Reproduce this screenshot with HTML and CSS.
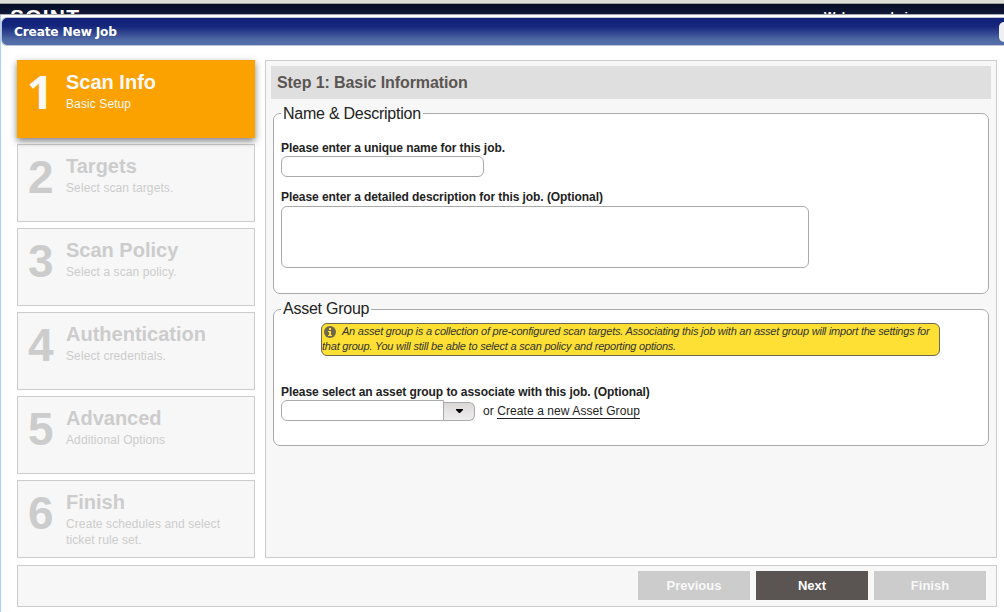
FILE: index.html
```html
<!DOCTYPE html>
<html lang="en">
<head>
<meta charset="utf-8">
<title>Create New Job</title>
<link rel="stylesheet" href="styles.css">
</head>
<body>
<div class="strip"></div>
<header class="masthead">
  <span class="logo">SOINT</span>
  <span class="welcome">Welcome admin</span>
</header>
<main class="dialog">
  <div class="titlebar"><h1>Create New Job</h1><span class="close"></span></div>
  <div class="wizard">
    <nav class="steps">
      <div class="step active"><span class="num">1</span><div><h2>Scan Info</h2><p>Basic Setup</p></div></div>
      <div class="step"><span class="num">2</span><div><h2>Targets</h2><p>Select scan targets.</p></div></div>
      <div class="step"><span class="num">3</span><div><h2>Scan Policy</h2><p>Select a scan policy.</p></div></div>
      <div class="step"><span class="num">4</span><div><h2>Authentication</h2><p>Select credentials.</p></div></div>
      <div class="step"><span class="num">5</span><div><h2>Advanced</h2><p>Additional Options</p></div></div>
      <div class="step"><span class="num">6</span><div><h2>Finish</h2><p>Create schedules and select ticket rule set.</p></div></div>
    </nav>
    <section class="panel">
      <h2 class="panel-title">Step 1: Basic Information</h2>
      <fieldset class="group details">
        <legend>Name &amp; Description</legend>
        <label for="job-name">Please enter a unique name for this job.</label>
        <input id="job-name" class="name" type="text">
        <label for="job-desc">Please enter a detailed description for this job. (Optional)</label>
        <textarea id="job-desc" class="desc"></textarea>
      </fieldset>
      <fieldset class="group assets">
        <legend>Asset Group</legend>
        <p class="note"><svg class="info" viewBox="0 0 12 12"><circle cx="6" cy="6" r="6" fill="#6e6750"/><path d="M5 2h2v2H5zM4 5h3v4h1v1H4V9h1V6H4z" fill="#fde033"/></svg>An asset group is a collection of pre-configured scan targets. Associating this job with an asset group will import the settings for<br><span class="last">that group. You will still be able to select a scan policy and reporting options.</span></p>
        <label for="asset">Please select an asset group to associate with this job. (Optional)</label>
        <div class="picker">
          <input id="asset" class="combo" type="text"><button class="drop" type="button" aria-label="Open"><svg width="7" height="4" viewBox="0 0 7 4"><path d="M0 0h7v1L4 4H3L0 1z"/></svg></button>
          <span class="or">or <a>Create a new Asset Group</a></span>
        </div>
      </fieldset>
    </section>
  </div>
  <footer class="actions">
    <button class="btn" type="button">Previous</button>
    <button class="btn next" type="button">Next</button>
    <button class="btn" type="button">Finish</button>
  </footer>
</main>
</body>
</html>
```
FILE: styles.css
```css
* { box-sizing: border-box; }
body { margin: 0; width: 1004px; height: 612px; overflow: hidden; background: #fff; font: 12px "Liberation Sans", Arial, sans-serif; color: #222; }
h1, h2, p { margin: 0; }
.strip { height: 4px; background: #dcddd8; border-bottom: 1px solid #a3a39f; }
.masthead { height: 11px; overflow: hidden; display: flex; justify-content: space-between; background: linear-gradient(#060b22, #11193a); border-bottom: 1px solid #aaa; color: #fff; }
.logo { margin: 1px 0 0 10px; font: bold 21px/24px "Liberation Sans", sans-serif; letter-spacing: 1.2px; }
.welcome { width: 180px; margin-top: 6px; font: bold 12px/14px "Liberation Sans", sans-serif; }
.dialog { height: 597px; padding-top: 2px; border-left: 1px solid #a9ceff; }
.titlebar { height: 29px; display: flex; justify-content: space-between; border: 1px solid #bfc5d7; border-right: 0; border-radius: 6px 0 0 6px; background: linear-gradient(#11217a, #14257b 30%, #4e68a4 80%, #5470ab); }
.titlebar h1 { margin-left: 12px; font: bold 12.2px/28px "DejaVu Sans", sans-serif; letter-spacing: -.18px; color: #fff; }
.close { width: 5px; height: 20px; margin-top: 4px; border-radius: 6px 0 0 6px; background: #f0f0ee; }
.wizard { display: flex; gap: 10px; padding: 14px 7px 0 16px; height: 512px; }
.steps { width: 238px; display: flex; flex-direction: column; gap: 6px; }
.step { height: 78px; display: flex; border: 1px solid #ccc; background: #f7f7f7; color: #ccc; }
.step.active { background: #fba200; border-color: #fba200; color: #f8f8f8; box-shadow: 0 3px 7px rgba(0,0,0,.5); z-index: 1; }
.num { width: 48px; padding-left: 10px; font: bold 46px/64px "Liberation Sans", sans-serif; }
.active .num { padding-left: 9px; font-family: "Noto Sans", sans-serif; line-height: 61px; }
.step h2 { margin-top: 10px; font-size: 20px; line-height: 23px; }
.step p { width: 175px; margin-top: 2px; line-height: 16px; letter-spacing: .1px; }
.panel { flex: 1; height: 498px; padding: 5px; border: 1px solid #ccc; background: #f7f7f7; }
.panel-title { height: 33px; padding-left: 6px; background: #dfdfdf; color: #5a5552; font-size: 16px; line-height: 33px; letter-spacing: -.09px; }
.group { margin: 0 2px; padding: 0 7px; border: 1px solid #aaa; border-radius: 7px; background: #fff; }
.group legend { margin: 0; padding: 0 2px; font-size: 16px; line-height: 18px; letter-spacing: -.25px; }
.group label { display: block; font-weight: bold; line-height: 16px; letter-spacing: -.07px; }
.details { height: 189px; margin-top: 6px; }
.details legend { line-height: 17px; }
.details label { margin-top: 18px; }
.name { display: block; width: 203px; height: 21px; margin: 0; border: 1px solid #aaa; border-radius: 6px; }
.name + label { margin-top: 12px; }
.desc { display: block; width: 528px; height: 62px; margin-top: 1px; resize: none; border: 1px solid #aaa; border-radius: 6px; }
.assets { height: 146px; margin-top: 6px; }
.note { width: 619px; height: 33px; margin: 5px 0 28px 40px; border: 1px solid #6d684e; border-radius: 6px; background: #fde033; color: #333; font-size: 11px; line-height: 15px; font-style: italic; white-space: nowrap; letter-spacing: -.23px; }
.last { letter-spacing: -.21px; }
.info { width: 12px; height: 12px; margin: 2px 6px 0 2px; vertical-align: top; }
.picker { display: flex; align-items: flex-start; }
.combo { width: 163px; height: 21px; margin: 0; border: 1px solid #aaa; border-radius: 6px 0 0 6px; }
.drop { width: 31px; height: 19px; margin-top: 2px; padding: 0 0 1px; display: grid; place-items: center; border: 1px solid #aaa; border-left: 0; border-radius: 0 6px 6px 0; background: linear-gradient(#ddd8d8, #eee); }
.or { margin: 3px 0 0 8px; line-height: 16px; letter-spacing: .08px; }
.or a { display: inline-block; line-height: 13px; border-bottom: 1px solid #222; }
.actions { height: 42px; margin: 7px 7px 0 16px; padding: 5px 10px 0 0; display: flex; justify-content: flex-end; gap: 6px; border: 1px solid #ccc; background: #f7f7f7; }
.btn { width: 112px; height: 29px; padding: 0; border: 0; background: #ccc; color: #f8f8f8; font: bold 13px "Liberation Sans", sans-serif; }
.btn.next { background: #5a5453; color: #fff; }
```
